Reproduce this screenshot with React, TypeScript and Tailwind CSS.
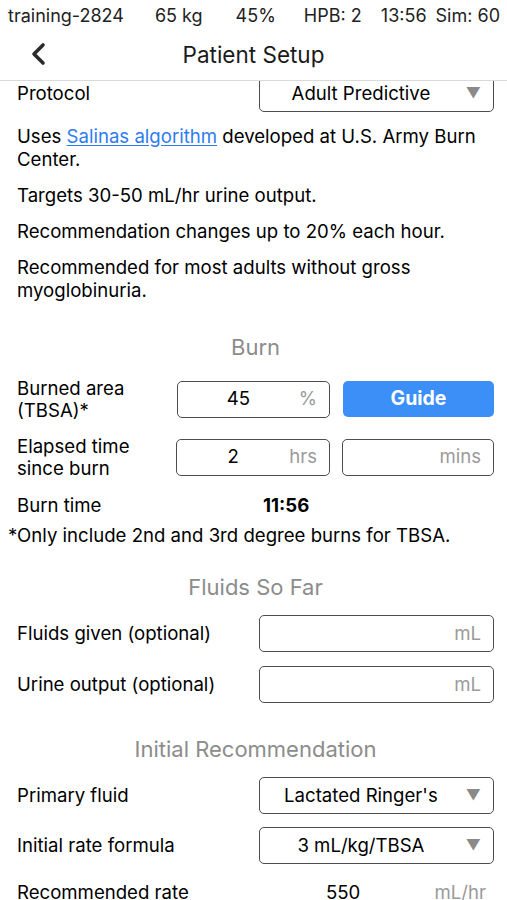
import React from "react";

/* ---------- small building blocks ---------- */

function UnitField({ value, unit, className }: { value?: string; unit: string; className?: string }) {
  return (
    <div
      className={`flex items-center h-[37px] rounded-[5px] border border-[#4d4d4d] ${className ?? ""}`}
    >
      <span className="flex-1 text-center text-black">{value}</span>
      <span className="pr-[12px] text-[#9a9a9a]">{unit}</span>
    </div>
  );
}

function SelectBox({ value }: { value: string }) {
  return (
    <div className="flex items-center w-[235px] h-[37px] rounded-[5px] border border-[#4d4d4d]">
      <span className="flex-1 text-center text-black pr-[4px]">{value}</span>
      <span className="pr-[12px] text-[15px] text-[#8a8a8a]">▼</span>
    </div>
  );
}

function Heading({ children, className }: { children: React.ReactNode; className?: string }) {
  return (
    <div className={`text-center text-[22px] leading-[28px] text-[#8c8c8c] ${className ?? ""}`}>
      {children}
    </div>
  );
}

/* ---------- page ---------- */

export default function App() {
  return (
    <div
      className="w-full h-[900px] overflow-hidden bg-white flex flex-col text-black text-[18.6px]"
      style={{ fontFamily: "Inter, 'Noto Sans', sans-serif" }}
    >
      {/* status bar */}
      <div className="h-[30px] flex items-center text-[18px] text-[#222] pl-[8px] pr-[7px]">
        <span>training-2824</span>
        <span className="ml-[31px]">65 kg</span>
        <span className="ml-[33px]">45%</span>
        <span className="ml-[28px]">HPB: 2</span>
        <span className="ml-auto">13:56</span>
        <span className="ml-[9px]">Sim: 60</span>
      </div>

      {/* nav bar */}
      <div className="relative z-10 h-[51px] flex items-center justify-center bg-white border-b border-[#d9d9d9]">
        <svg className="absolute left-[30px] top-[12px]" width="18" height="24" viewBox="0 0 18 24">
          <polyline
            points="13,3 4,12 13,21"
            fill="none"
            stroke="#2b2b2b"
            strokeWidth="3.6"
            strokeLinecap="round"
            strokeLinejoin="round"
          />
        </svg>
        <span className="text-[22.5px] text-[#1a1a1a]">Patient Setup</span>
      </div>

      {/* scrolled content */}
      <div className="flex-1 overflow-hidden">
        <div className="-mt-[6px] pl-[17px] pr-[13px]">
          {/* protocol */}
          <div className="flex items-center justify-between">
            <span>Protocol</span>
            <SelectBox value="Adult Predictive" />
          </div>

          <div className="mt-[13px] leading-[23px] space-y-[13px]">
            <p>
              Uses{" "}
              <span className="text-[#2f7cf0] underline underline-offset-2">Salinas algorithm</span>{" "}
              developed at U.S. Army Burn Center.
            </p>
            <p>Targets 30-50 mL/hr urine output.</p>
            <p>Recommendation changes up to 20% each hour.</p>
            <p>Recommended for most adults without gross myoglobinuria.</p>
          </div>

          {/* burn */}
          <Heading className="mt-[31px]">Burn</Heading>

          <div className="mt-[16px] flex items-center">
            <span className="w-[160px] leading-[22px]">
              Burned area
              <br />
              (TBSA)*
            </span>
            <UnitField value="45" unit="%" className="w-[153px]" />
            <button className="ml-[13px] w-[151px] h-[36px] rounded-[5px] bg-[#3b8ff6] text-white text-[19.5px] font-bold">
              Guide
            </button>
          </div>

          <div className="mt-[14px] flex items-center">
            <span className="w-[159px] leading-[22px]">
              Elapsed time
              <br />
              since burn
            </span>
            <UnitField value="2" unit="hrs" className="w-[154px]" />
            <UnitField unit="mins" className="ml-[12px] w-[152px]" />
          </div>

          <div className="mt-[15px] flex items-center leading-[23px]">
            <span className="w-[246px]">Burn time</span>
            <span className="font-bold">11:56</span>
          </div>
        </div>

        <p className="mt-[7px] pl-[8px] leading-[23px]">
          *Only include 2nd and 3rd degree burns for TBSA.
        </p>

        <div className="pl-[17px] pr-[13px]">
          {/* fluids */}
          <Heading className="mt-[26px]">Fluids So Far</Heading>

          <div className="mt-[14px] flex items-center justify-between">
            <span>Fluids given (optional)</span>
            <UnitField unit="mL" className="w-[235px]" />
          </div>
          <div className="mt-[14px] flex items-center justify-between">
            <span>Urine output (optional)</span>
            <UnitField unit="mL" className="w-[235px]" />
          </div>

          {/* initial recommendation */}
          <Heading className="mt-[32px]">Initial Recommendation</Heading>

          <div className="mt-[14px] flex items-center justify-between">
            <span>Primary fluid</span>
            <SelectBox value="Lactated Ringer's" />
          </div>
          <div className="mt-[13px] flex items-center justify-between">
            <span>Initial rate formula</span>
            <SelectBox value="3 mL/kg/TBSA" />
          </div>

          <div className="mt-[17px] flex items-center leading-[23px]">
            <span className="w-[309px]">Recommended rate</span>
            <span>550</span>
            <span className="ml-auto pr-[8px] text-[#9a9a9a]">mL/hr</span>
          </div>
        </div>
      </div>
    </div>
  );
}
